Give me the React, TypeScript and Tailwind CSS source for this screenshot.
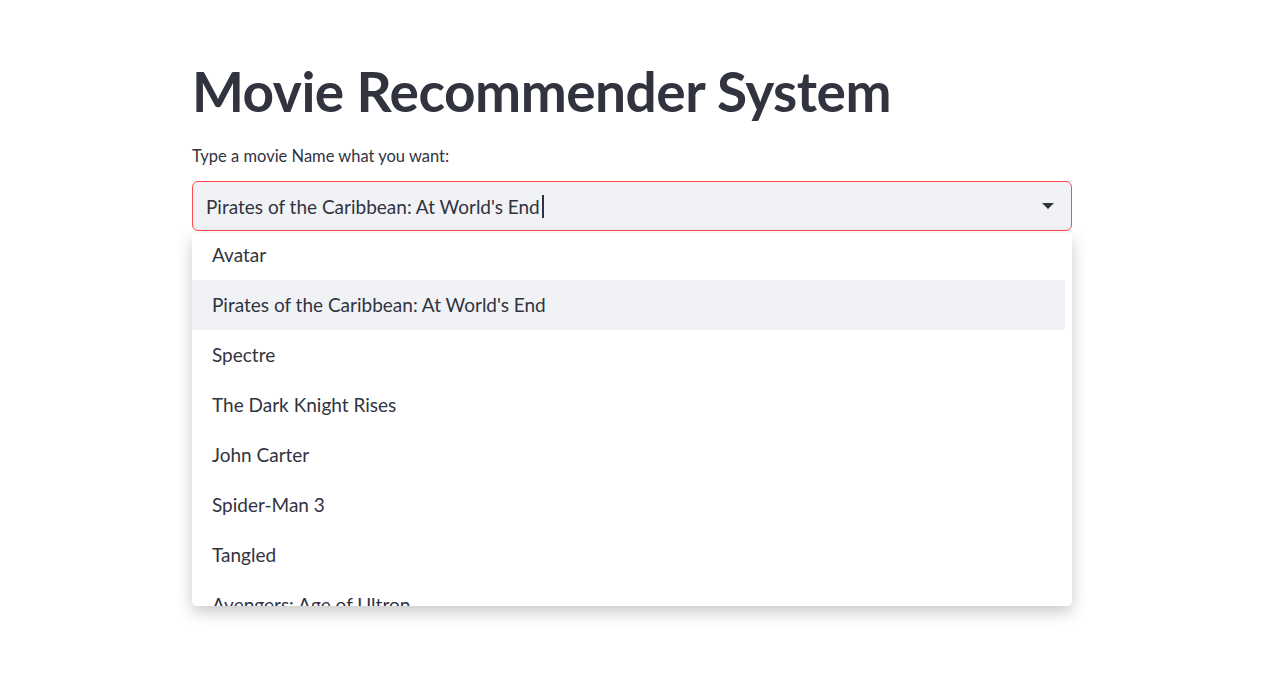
// App.tsx

const movies = [
  "Avatar",
  "Pirates of the Caribbean: At World's End",
  "Spectre",
  "The Dark Knight Rises",
  "John Carter",
  "Spider-Man 3",
  "Tangled",
  "Avengers: Age of Ultron",
];

const selected = "Pirates of the Caribbean: At World's End";

const App = () => {
  return (
    <div className="min-h-[692px] bg-white font-['Source_Sans_Pro','Lato',sans-serif] text-[#31333f]">
      <div className="ml-[192px] w-[880px] pt-[58px]">
        {/* タイトル */}
        <h1 className="text-[55px] font-bold leading-[1.2] tracking-[-0.5px]">
          Movie Recommender System
        </h1>

        {/* セレクトボックス */}
        <div className="mt-[21px]">
          <label className="block text-[16.5px] leading-[22px] mb-[14px]">
            Type a movie Name what you want:
          </label>
          <div className="relative">
            <div className="flex h-[50px] items-center rounded-[6px] border border-[#ff4b4b] bg-[#f0f2f6] pl-[13px] pr-[16px]">
              <span className="text-[19px] leading-none">{selected}</span>
              <span className="ml-[2px] h-[23px] w-[2px] bg-[#31333f]" />
              <div className="ml-auto">
                <svg width="14" height="8" viewBox="0 0 14 8">
                  <path d="M1 1h12l-6 6z" fill="#31333f" />
                </svg>
              </div>
            </div>

            {/* ドロップダウン */}
            <div className="absolute left-0 right-0 top-[52px] h-[373px] overflow-hidden rounded-[5px] bg-white shadow-[0_6px_16px_rgba(0,0,0,0.22)]">
              <ul className="-mt-[3px] pr-[7px]">
                {movies.map((m) => (
                  <li
                    key={m}
                    className={`flex h-[50px] items-center pl-[20px] text-[19px] ${
                      m === selected ? "bg-[#f0f2f6]" : ""
                    }`}
                  >
                    {m}
                  </li>
                ))}
              </ul>
            </div>
          </div>
        </div>
      </div>
    </div>
  );
};

export default App;
